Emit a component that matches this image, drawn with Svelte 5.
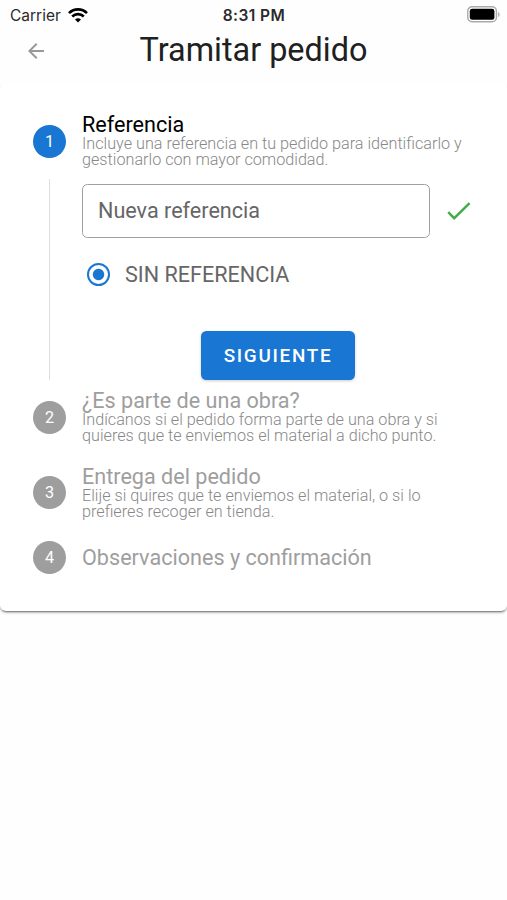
<script lang="ts">
  type Step = { title: string; lines: string[] };

  const steps: Step[] = [
    {
      title: "Referencia",
      lines: [
        "Incluye una referencia en tu pedido para identificarlo y",
        "gestionarlo con mayor comodidad.",
      ],
    },
    {
      title: "¿Es parte de una obra?",
      lines: [
        "Indícanos si el pedido forma parte de una obra y si",
        "quieres que te enviemos el material a dicho punto.",
      ],
    },
    {
      title: "Entrega del pedido",
      lines: [
        "Elije si quires que te enviemos el material, o si lo",
        "prefieres recoger en tienda.",
      ],
    },
    { title: "Observaciones y confirmación", lines: [] },
  ];

  let current = 0;
  let reference = "";
  let noReference = "none";
</script>

<div class="screen">
  <div class="status">
    <div class="carrier">
      <span>Carrier</span>
      <svg width="20" height="15" viewBox="0 0 20 15">
        <path d="M1 5.1a12.7 12.7 0 0 1 18 0" />
        <path d="M4.2 8.5a8.2 8.2 0 0 1 11.6 0" />
        <path class="fill" d="M10 14.6l3-3a4.3 4.3 0 0 0-6 0z" />
      </svg>
    </div>
    <span class="time">8:31 PM</span>
    <svg class="battery" width="33" height="17" viewBox="0 0 33 17">
      <rect x="0.8" y="0.8" width="28.6" height="15" rx="4.3" />
      <rect class="level" x="2.8" y="2.8" width="24.6" height="11" rx="2.4" />
      <path d="M31.2 6v5c1.8-.6 1.8-4.4 0-5z" />
    </svg>
  </div>

  <header>
    <button class="back" aria-label="Volver">
      <svg width="16" height="16" viewBox="4 4 16 16">
        <path d="M20 11H7.83l5.59-5.59L12 4l-8 8 8 8 1.41-1.41L7.83 13H20v-2z" />
      </svg>
    </button>
    <h1>Tramitar pedido</h1>
  </header>

  <main class="card">
    {#each steps as step, i}
      <div class="step" class:active={i === current}>
        <span class="number">{i + 1}</span>
        <div class="label">
          <h2>{step.title}</h2>
          {#each step.lines as line}
            <p>{line}</p>
          {/each}
        </div>
      </div>
      {#if i === current}
        <div class="content">
          <div class="field">
            <input type="text" placeholder="Nueva referencia" bind:value={reference} />
            <svg width="24" height="18" viewBox="0 0 24 18">
              <path d="M1.2 10.2l6 6L22.6 1.2" />
            </svg>
          </div>
          <label class="radio">
            <input type="radio" value="none" bind:group={noReference} />
            <span>SIN REFERENCIA</span>
          </label>
          <button class="next">SIGUIENTE</button>
        </div>
      {/if}
    {/each}
  </main>
</div>

<style>
  :global(body) {
    margin: 0;
    background: #fefefe;
  }

  .screen {
    min-height: 900px;
    overflow: hidden;
    font-family: Roboto, sans-serif;
  }

  h1,
  h2,
  p {
    margin: 0;
    font-weight: 400;
  }

  .status {
    display: grid;
    grid-template-columns: 1fr auto 1fr;
    align-items: center;
    height: 29px;
    padding: 0 7px 0 10px;
    font-family: Inter, sans-serif;
    font-size: 15.5px;
    color: #2a2a2a;
  }

  .carrier {
    display: flex;
    align-items: center;
    gap: 7px;
    padding-top: 1px;
  }

  .carrier svg {
    fill: none;
    stroke: #000;
    stroke-width: 2.6;
  }

  .carrier .fill {
    fill: #000;
    stroke: none;
  }

  .time {
    margin-right: 2px;
    padding-top: 1px;
    font-weight: 600;
    letter-spacing: 0.45px;
  }

  .battery {
    justify-self: end;
    fill: #aaa;
  }

  .battery rect {
    fill: #fff;
    stroke: #aaa;
    stroke-width: 1.4;
  }

  .battery .level {
    fill: #000;
    stroke: none;
  }

  header {
    display: grid;
    grid-template-columns: 60px 1fr 60px;
    align-items: center;
    height: 54px;
    box-sizing: border-box;
    padding-bottom: 11px;
  }

  .back {
    display: flex;
    padding: 0 0 0 28px;
    border: none;
    background: none;
  }

  .back svg {
    fill: #999;
  }

  h1 {
    text-align: center;
    font-size: 32.4px;
    line-height: 43px;
    color: #202020;
  }

  .card {
    height: 528px;
    box-sizing: border-box;
    padding: 31px 32px 0 33px;
    border-radius: 6px;
    background: #fff;
    box-shadow: 0 2px 2px -1px rgba(0, 0, 0, 0.5), 0 2px 3px rgba(0, 0, 0, 0.14);
  }

  .step {
    display: flex;
    align-items: center;
    gap: 16px;
    margin-bottom: 21.5px;
    color: #9e9e9e;
  }

  .number {
    display: flex;
    flex: none;
    align-items: center;
    justify-content: center;
    width: 33px;
    height: 33px;
    border-radius: 50%;
    background: #9e9e9e;
    color: #fff;
    font-size: 16.2px;
  }

  .active {
    margin-bottom: 11px;
  }

  .active .number {
    background: #1976d2;
  }

  .active h2 {
    color: #000;
  }

  h2 {
    font-size: 21.6px;
    line-height: 22px;
    white-space: nowrap;
  }

  p {
    font-size: 16.2px;
    font-weight: 300;
    line-height: 16px;
    white-space: nowrap;
    color: #888;
  }

  .content {
    display: flex;
    flex-direction: column;
    height: 201px;
    box-sizing: border-box;
    margin: 0 0 10px 16px;
    padding: 5px 0 0 32px;
    border-left: 1.4px solid #dedede;
  }

  .field {
    display: flex;
    align-items: center;
    gap: 17px;
  }

  .field input {
    width: 348px;
    height: 54px;
    box-sizing: border-box;
    padding: 0 15px 1px;
    border: 1.4px solid #a0a0a0;
    border-radius: 5.4px;
    font-family: inherit;
    font-size: 21.6px;
    color: #000;
  }

  .field input::placeholder {
    color: #666;
    opacity: 1;
  }

  .field svg {
    fill: none;
    stroke: #43ab48;
    stroke-width: 2.4;
  }

  .radio {
    display: flex;
    align-items: center;
    gap: 15px;
    height: 24px;
    margin: 24px 0 0 4px;
    font-size: 21.6px;
    color: #666;
  }

  .radio input {
    appearance: none;
    width: 23px;
    height: 23px;
    margin: 0 0.5px;
    border: 2.4px solid #1976d2;
    border-radius: 50%;
    background: radial-gradient(circle, #1976d2 5.2px, transparent 6.2px);
  }

  .next {
    align-self: center;
    width: 154px;
    height: 49px;
    margin: 45px 2px 0 0;
    padding: 0 0 1px 1px;
    border: none;
    border-radius: 5.4px;
    background: #1976d2;
    box-shadow: 0 1px 3px rgba(0, 0, 0, 0.2);
    color: #fff;
    font-family: inherit;
    font-size: 18.9px;
    font-weight: 500;
    letter-spacing: 1.69px;
  }
</style>
